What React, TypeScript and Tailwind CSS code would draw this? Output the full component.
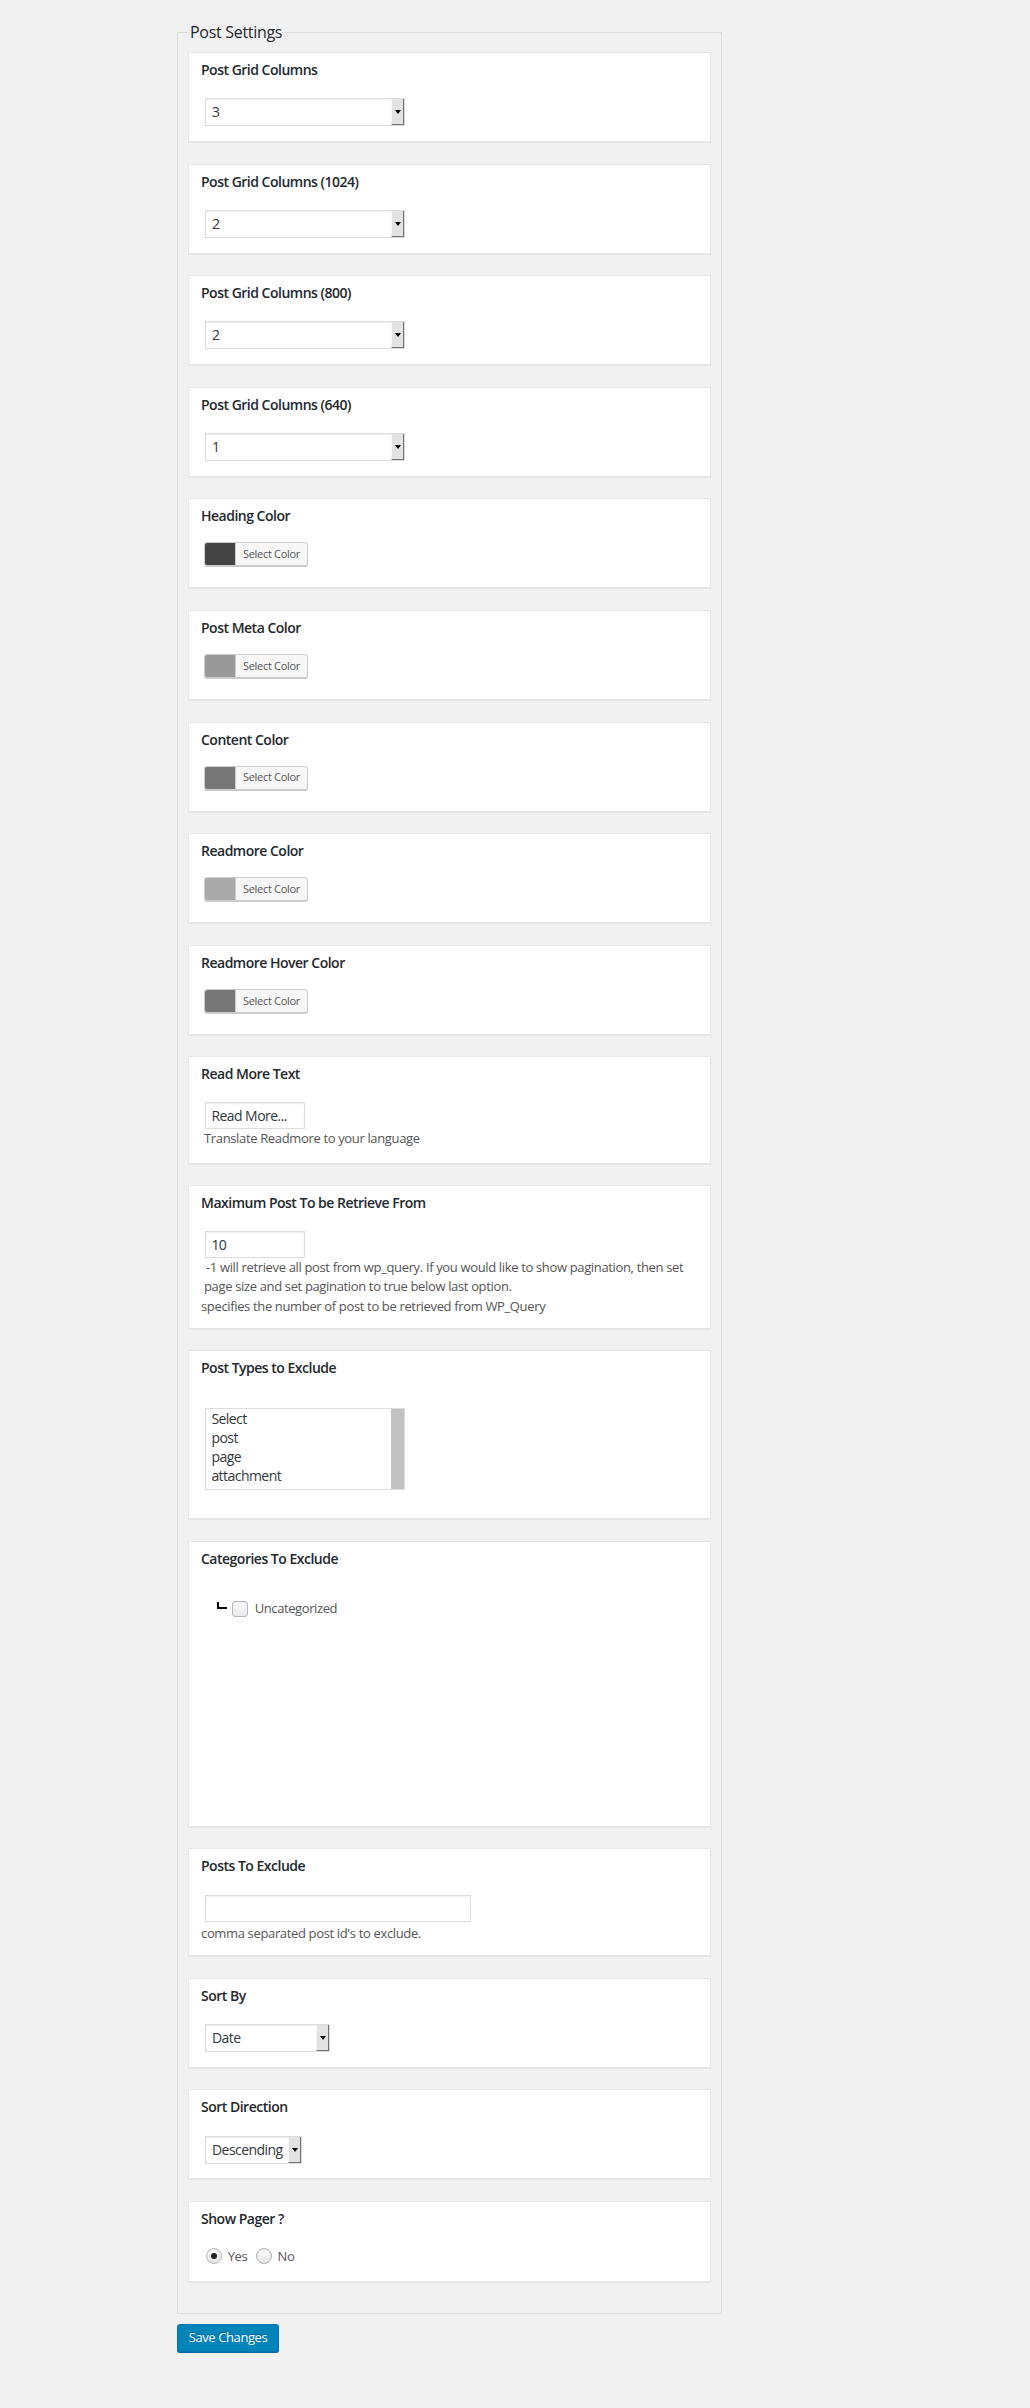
import React from "react";

const selectCards = [
  { label: "Post Grid Columns", value: "3" },
  { label: "Post Grid Columns (1024)", value: "2" },
  { label: "Post Grid Columns (800)", value: "2" },
  { label: "Post Grid Columns (640)", value: "1" },
];

const colorCards = [
  { label: "Heading Color", swatch: "bg-[#444444]" },
  { label: "Post Meta Color", swatch: "bg-[#999999]" },
  { label: "Content Color", swatch: "bg-[#777777]" },
  { label: "Readmore Color", swatch: "bg-[#aaaaaa]" },
  { label: "Readmore Hover Color", swatch: "bg-[#777777]" },
];

function Card({ h, children }: { h: string; children: React.ReactNode }) {
  return (
    <div
      className={`${h} bg-white border border-[#e5e5e5] shadow-[0_1px_1px_rgba(0,0,0,0.04)] px-[12px] pt-[8px]`}
    >
      {children}
    </div>
  );
}

function Label({ children }: { children: React.ReactNode }) {
  return (
    <h4 className="text-[14px] leading-[18px] font-semibold tracking-[-0.5px] text-[#23282d]">
      {children}
    </h4>
  );
}

function FakeSelect({ value, w, mt }: { value: string; w: string; mt: string }) {
  return (
    <div
      className={`${w} ${mt} ml-[4px] h-[28px] flex border border-[#dddddd] bg-white shadow-[inset_0_1px_2px_rgba(0,0,0,0.07)]`}
    >
      <span className="flex-1 pl-[6px] text-[14px] leading-[26px] tracking-[-0.55px] text-[#32373c]">
        {value}
      </span>
      <span className="w-[13px] h-full bg-[#e3e3e3] border-l border-l-[#f6f6f6] border-r border-b border-r-[#707070] border-b-[#707070] flex justify-center pt-[11px]">
        <svg width="6" height="4" viewBox="0 0 6 4">
          <path d="M0 0H6L3 4Z" fill="#000" />
        </svg>
      </span>
    </div>
  );
}

function ColorButton({ swatch }: { swatch: string }) {
  return (
    <div className="mt-[17px] ml-[3px] flex h-[24px] w-[103.6px] rounded-[3px] border border-[#cccccc] bg-[#f7f7f7] shadow-[0_1px_0_#cccccc] overflow-hidden">
      <span className={`w-[30.4px] h-full ${swatch}`} />
      <span className="flex-1 border-l border-[#cccccc] text-[11px] tracking-[-0.3px] text-[#555555] flex items-center justify-center">
        Select Color
      </span>
    </div>
  );
}

function TextInput({ value, w, mt }: { value: string; w: string; mt: string }) {
  return (
    <div
      className={`${w} ${mt} h-[27px] border border-[#dddddd] bg-white shadow-[inset_0_1px_2px_rgba(0,0,0,0.07)] pl-[5.4px] text-[14px] leading-[25px] tracking-[-0.55px] text-[#32373c]`}
    >
      {value}
    </div>
  );
}

function Help({ children, className = "" }: { children: React.ReactNode; className?: string }) {
  return (
    <p className={`text-[13px] leading-[19px] tracking-[-0.35px] text-[#555555] ${className}`}>
      {children}
    </p>
  );
}

function Radio({ checked }: { checked?: boolean }) {
  return (
    <span className="w-[16px] h-[16px] rounded-full border border-[#b4b9be] bg-gradient-to-b from-white to-[#e6e6e6] shadow-[inset_0_1px_2px_rgba(0,0,0,0.1)] flex items-center justify-center">
      {checked && <span className="w-[6px] h-[6px] rounded-full bg-[#222222]" />}
    </span>
  );
}

export default function App() {
  return (
    <div className="min-h-[2408px] bg-[#f1f1f1] pl-[177px] pt-[22px] font-['Open_Sans',sans-serif]">
      <fieldset className="w-[545px] border border-[#dcdcdc] px-[10px] pt-[10px] pb-[31px]">
        <legend className="-ml-px px-[3px] text-[16px] leading-[20px] tracking-[-0.3px] text-[#23282d]">
          Post Settings
        </legend>
        <div className="flex flex-col gap-[21.6px]">
          {selectCards.map((c) => (
            <Card key={c.label} h="h-[90px]">
              <Label>{c.label}</Label>
              <FakeSelect value={c.value} w="w-[200px]" mt="mt-[19px]" />
            </Card>
          ))}

          {colorCards.map((c) => (
            <Card key={c.label} h="h-[90px]">
              <Label>{c.label}</Label>
              <ColorButton swatch={c.swatch} />
            </Card>
          ))}

          <Card h="h-[107.3px]">
            <Label>Read More Text</Label>
            <div className="ml-[3px]">
              <TextInput value="Read More..." w="w-[100px] ml-[1px]" mt="mt-[18.3px]" />
              <Help>Translate Readmore to your language</Help>
            </div>
          </Card>

          <Card h="h-[143.3px]">
            <Label>Maximum Post To be Retrieve From</Label>
            <div className="ml-[3px]">
              <TextInput value="10" w="w-[100px] ml-[1px]" mt="mt-[18.3px]" />
              <Help className="indent-[2px]">
                -1 will retrieve all post from wp_query. If you would like to show pagination, then set
                page size and set pagination to true below last option.
              </Help>
            </div>
            <Help className="mt-[1.4px]">specifies the number of post to be retrieved from WP_Query</Help>
          </Card>

          <Card h="h-[169.3px]">
            <Label>Post Types to Exclude</Label>
            <div className="mt-[31.3px] ml-[4px] w-[200px] h-[82px] flex border border-[#dddddd] bg-white">
              <div className="flex-1 pl-[5.4px] text-[14px] leading-[19px] tracking-[-0.55px] text-[#32373c]">
                <div>Select</div>
                <div>post</div>
                <div>page</div>
                <div>attachment</div>
              </div>
              <div className="w-[12.6px] h-full bg-[#c1c1c1]" />
            </div>
          </Card>

          <Card h="h-[285.7px]">
            <Label>Categories To Exclude</Label>
            <div className="mt-[33px] ml-[16px] flex items-center h-[16px]">
              <span className="self-start mt-[0.7px] w-[10px] h-[7px] border-l-2 border-b-2 border-black" />
              <span className="ml-[4.7px] w-[16px] h-[16px] rounded-[3px] border border-[#b4b9be] bg-gradient-to-b from-white to-[#e8e8e8] shadow-[inset_0_1px_2px_rgba(0,0,0,0.08)]" />
              <span className="ml-[7px] text-[13px] tracking-[-0.4px] text-[#555555]">Uncategorized</span>
            </div>
          </Card>

          <Card h="h-[108px]">
            <Label>Posts To Exclude</Label>
            <TextInput value="" w="w-[266px] ml-[4px]" mt="mt-[20px]" />
            <Help className="mt-[2px]">comma separated post id's to exclude.</Help>
          </Card>

          <Card h="h-[90px]">
            <Label>Sort By</Label>
            <FakeSelect value="Date" w="w-[125px]" mt="mt-[19px]" />
          </Card>

          <Card h="h-[90px]">
            <Label>Sort Direction</Label>
            <FakeSelect value="Descending" w="w-[97px]" mt="mt-[19.3px]" />
          </Card>

          <Card h="h-[80.6px]">
            <Label>Show Pager ?</Label>
            <div className="mt-[20.3px] ml-[4.7px] flex items-center h-[16px] text-[13px] tracking-[-0.4px] text-[#555555]">
              <Radio checked />
              <span className="ml-[6px]">Yes</span>
              <span className="ml-[9px]">
                <Radio />
              </span>
              <span className="ml-[5.3px]">No</span>
            </div>
          </Card>
        </div>
      </fieldset>
      <button className="mt-[10px] w-[102px] h-[28.7px] rounded-[3px] border border-[#0073aa] bg-[#0085ba] shadow-[0_1px_0_#006799] text-white text-[13px] tracking-[-0.4px] [text-shadow:0_-1px_1px_#006799]">
        Save Changes
      </button>
    </div>
  );
}
